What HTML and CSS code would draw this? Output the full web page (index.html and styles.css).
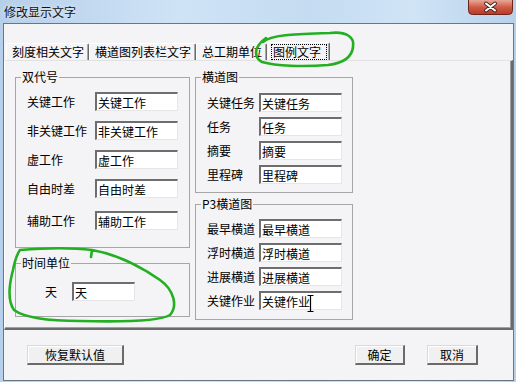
FILE: index.html
```html
<!DOCTYPE html>
<html lang="zh-CN">
<head>
    <meta charset="UTF-8">
    <title>修改显示文字</title>
    <link rel="stylesheet" href="styles.css">
</head>
<body>
    <div class="window">
        <div class="titlebar">
            <span class="title">修改显示文字</span>
            <svg class="close-btn" width="45" height="15" viewBox="0 0 45 15">
                <defs>
                    <linearGradient id="closeGrad" x1="0" y1="0" x2="0" y2="1">
                        <stop offset="0" stop-color="#e8a898"/>
                        <stop offset="0.5" stop-color="#d05a44"/>
                        <stop offset="1" stop-color="#b7382a"/>
                    </linearGradient>
                </defs>
                <path d="M0.5 0 V10.5 Q0.5 14.5 4.5 14.5 H40.5 Q44.5 14.5 44.5 10.5 V0" fill="url(#closeGrad)" stroke="#6e2418"/>
                <path d="M18 3.5 L27 10.5 M27 3.5 L18 10.5" stroke="#4a2a26" stroke-width="4" stroke-linecap="round"/>
                <path d="M18 3.5 L27 10.5 M27 3.5 L18 10.5" stroke="#ffffff" stroke-width="2" stroke-linecap="round"/>
            </svg>
        </div>

        <div class="client">
            <div class="tabs">
                <div class="tab">刻度相关文字</div>
                <div class="tab">横道图列表栏文字</div>
                <div class="tab">总工期单位</div>
                <div class="tab active"><span class="focus">图例文字</span></div>
            </div>

            <div class="panel">
                <div class="col col-left">
                    <fieldset class="group group-dcode">
                        <legend>双代号</legend>
                        <div class="rows">
                            <div class="row"><label>关键工作</label><input type="text" value="关键工作"></div>
                            <div class="row"><label>非关键工作</label><input type="text" value="非关键工作"></div>
                            <div class="row"><label>虚工作</label><input type="text" value="虚工作"></div>
                            <div class="row"><label>自由时差</label><input type="text" value="自由时差"></div>
                            <div class="row row-last"><label>辅助工作</label><input type="text" value="辅助工作"></div>
                        </div>
                    </fieldset>
                    <fieldset class="group group-time">
                        <legend>时间单位</legend>
                        <div class="rows">
                            <div class="row"><label>天</label><input type="text" value="天"></div>
                        </div>
                    </fieldset>
                </div>

                <div class="col col-right">
                    <fieldset class="group group-bar">
                        <legend>横道图</legend>
                        <div class="rows">
                            <div class="row"><label>关键任务</label><input type="text" value="关键任务"></div>
                            <div class="row"><label>任务</label><input type="text" value="任务"></div>
                            <div class="row"><label>摘要</label><input type="text" value="摘要"></div>
                            <div class="row"><label>里程碑</label><input type="text" value="里程碑"></div>
                        </div>
                    </fieldset>
                    <fieldset class="group group-p3">
                        <legend>P3横道图</legend>
                        <div class="rows">
                            <div class="row"><label>最早横道</label><input type="text" value="最早横道"></div>
                            <div class="row"><label>浮时横道</label><input type="text" value="浮时横道"></div>
                            <div class="row"><label>进展横道</label><input type="text" value="进展横道"></div>
                            <div class="row"><label>关键作业</label><input type="text" value="关键作业"></div>
                        </div>
                    </fieldset>
                </div>
            </div>

            <div class="footer">
                <button class="btn btn-reset">恢复默认值</button>
                <div class="footer-right">
                    <button class="btn btn-ok">确定</button>
                    <button class="btn btn-cancel">取消</button>
                </div>
            </div>
        </div>

        <!-- hand-drawn marks and mouse cursor lying over the dialog -->
        <svg class="marks" width="516" height="382" viewBox="0 0 516 382">
            <path d="M263 42 C272 34, 300 34, 330 33 C346 31, 355 37, 353 47 C352 57, 344 63, 328 65 C303 67, 276 66, 262 62 C254 58, 253 47, 266 38"
                  fill="none" stroke="#22b022" stroke-width="2.6" stroke-linecap="round"/>
            <path d="M20 250 C45 248, 75 248, 92 250 M92 250 L91 257 M92 250 C115 254, 140 266, 160 280 C174 290, 178 306, 170 315 C160 321, 120 322, 80 321 C50 321, 25 318, 14 310 C7 300, 9 285, 13 270 C15 260, 17 254, 20 250"
                  fill="none" stroke="#22b022" stroke-width="2.6" stroke-linecap="round"/>
            <path d="M307.5 295.5 H313.5 M310.5 295.5 V311.5 M307.5 311.5 H313.5" fill="none" stroke="#000" stroke-width="1.2"/>
        </svg>
    </div>
</body>
</html>
```

FILE: styles.css
```css
* {
    box-sizing: border-box;
}
body {
    margin: 0;
    background: #b8d0ea;
    font-family: "Noto Sans CJK SC", "Noto Sans", sans-serif;
    font-size: 12px;
    line-height: 14px;
    color: #000;
}
.window {
    position: relative;
    width: 516px;
    height: 382px;
    display: flex;
    flex-direction: column;
    overflow: hidden;
    background: linear-gradient(90deg, #b6cfea, #cfe3f6 35%, #c4dbf1 60%, #d0e4f6 80%, #b8d1eb);
}
.titlebar {
    height: 23px;
    display: flex;
    align-items: center;
    padding-left: 4px;
}
.title {
    flex: 1;
    color: #111;
    text-shadow: 0 0 5px rgba(255, 255, 255, 0.9);
}
.close-btn {
    align-self: flex-start;
    margin-right: 3px;
    display: block;
}
.client {
    margin: 0 2px 0 3px;
    height: 358px;
    border: 1px solid #66778a;
    background: #f4f3f5;
    display: flex;
    flex-direction: column;
}

/* tabs */
.tabs {
    height: 36px;
    padding: 18px 0 0 2px;
    display: flex;
    align-items: flex-end;
}
.tab {
    height: 17px;
    padding: 0 4px 0 5px;
    border-top: 1px solid #ffffff;
    border-left: 1px solid #ffffff;
    border-right: 1px solid #6a6a6a;
    box-shadow: inset -1px 0 #a8a8a8;
    border-radius: 2px 2px 0 0;
    line-height: 15px;
    white-space: nowrap;
}
.tab.active {
    height: 18px;
    margin-left: 1px;
    padding: 1px 2px 0 2px;
}
.focus {
    display: block;
    border: 1px dotted #000;
    padding: 0 5px 0 1px;
    line-height: 14px;
}

/* tab page */
.panel {
    height: 270px;
    border-style: solid;
    border-width: 1px 2px 2px 1px;
    border-color: #e2e2e2 #6a6a6a #6a6a6a #ffffff;
    box-shadow: inset -1px -1px #a0a0a0;
    padding: 9px 0 0 10px;
    display: flex;
    gap: 5px;
}
.col {
    display: flex;
    flex-direction: column;
}
.col-left {
    width: 175px;
}
.col-right {
    width: 158px;
}
.group {
    margin: 0;
    padding: 0;
    min-width: 0;
    border: 1px solid #a6a6a6;
}
.group legend {
    margin-left: 5px;
    padding: 0 1px;
    line-height: 14px;
}
.rows {
    display: flex;
    flex-direction: column;
}
.row {
    height: 19px;
    display: flex;
    align-items: center;
}
.row label {
    line-height: 19px;
    white-space: nowrap;
}
.row input {
    height: 19px;
    width: 83px;
    padding: 0 0 0 1px;
    margin: 0;
    border-style: solid;
    border-width: 2px 1px 1px 2px;
    border-color: #6e6e6e #e6e6e6 #e6e6e6 #6e6e6e;
    background: #fff;
    font-family: inherit;
    font-size: 12px;
    color: #000;
    outline: none;
}

.group-dcode .rows {
    gap: 10px;
    padding: 8px 0 17px 11px;
}
.group-dcode label {
    width: 68px;
}
.group-dcode .row-last {
    margin-top: 3px;
}
.group-time {
    margin-top: 8px;
}
.group-time .rows {
    padding: 12px 0 15px 29px;
}
.group-time label {
    width: 27px;
}
.group-time input {
    width: 63px;
}
.group-bar .rows,
.group-p3 .rows {
    gap: 5px;
}
.group-bar .rows {
    padding: 9px 0 8px 11px;
}
.group-p3 {
    margin-top: 4px;
}
.group-p3 .rows {
    padding: 8px 0 9px 11px;
}
.col-right label {
    width: 52px;
}

/* buttons */
.footer {
    display: flex;
    align-items: flex-start;
    padding: 15px 35px 0 23px;
}
.footer-right {
    margin-left: auto;
    display: flex;
    gap: 22px;
}
.btn {
    height: 20px;
    padding: 0;
    border-style: solid;
    border-width: 1px 2px 2px 1px;
    border-color: #d9d9d9 #6a6a6a #6a6a6a #d9d9d9;
    box-shadow: inset 1px 1px #ffffff;
    background: #f0f0f0;
    font-family: inherit;
    font-size: 12px;
    line-height: 16px;
    color: #000;
}
.btn-reset {
    width: 97px;
}
.btn-ok {
    width: 50px;
}
.btn-cancel {
    width: 51px;
}

.marks {
    position: absolute;
    top: 0;
    left: 0;
    pointer-events: none;
}
```
